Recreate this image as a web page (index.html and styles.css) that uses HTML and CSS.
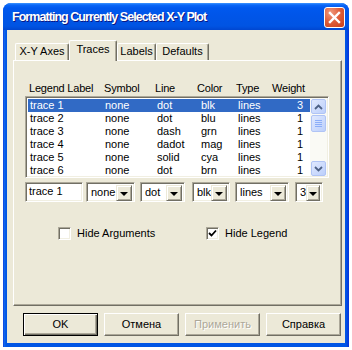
FILE: index.html
```html
<!DOCTYPE html>
<html lang="en">
<head>
  <meta charset="UTF-8">
  <title>Formatting Currently Selected X-Y Plot</title>
  <link rel="stylesheet" href="styles.css">
</head>
<body>
<div class="window">
  <div class="titlebar">
    <span class="title">Formatting Currently Selected X-Y Plot</span>
    <span class="close">
      <svg width="21" height="21" viewBox="0 0 21 21">
        <path d="M6 6 L15 15 M15 6 L6 15" stroke="#fff" stroke-width="2.4" stroke-linecap="square"/>
      </svg>
    </span>
  </div>

  <div class="client">
    <div class="tabs">
      <div class="tab tab-axes">X-Y Axes</div>
      <div class="tab tab-traces active">Traces</div>
      <div class="tab tab-labels">Labels</div>
      <div class="tab tab-defaults">Defaults</div>
    </div>

    <div class="panel">
      <div class="cols">
        <span>Legend Label</span>
        <span>Symbol</span>
        <span>Line</span>
        <span>Color</span>
        <span>Type</span>
        <span>Weight</span>
      </div>

      <div class="listbox">
        <div class="rows" id="rows"></div>
        <div class="vscroll">
          <div class="sbtn">
            <svg width="9" height="6" viewBox="0 0 9 6"><path d="M1 5 L4.5 1.5 L8 5" fill="none" stroke="#4d6185" stroke-width="1.8"/></svg>
          </div>
          <div class="thumb"><i></i><i></i><i></i><i></i></div>
          <div class="track"></div>
          <div class="sbtn">
            <svg width="9" height="6" viewBox="0 0 9 6"><path d="M1 1 L4.5 4.5 L8 1" fill="none" stroke="#4d6185" stroke-width="1.8"/></svg>
          </div>
        </div>
      </div>

      <div class="editrow">
        <div class="field f-label">trace 1</div>
        <div class="combo c-symbol"><span>none</span><b class="drop"></b></div>
        <div class="combo c-line"><span>dot</span><b class="drop"></b></div>
        <div class="combo c-color"><span>blk</span><b class="drop"></b></div>
        <div class="combo c-type"><span>lines</span><b class="drop"></b></div>
        <div class="combo c-weight"><span>3</span><b class="drop"></b></div>
      </div>

      <div class="checks">
        <label class="check c-args"><span class="box"></span>Hide Arguments</label>
        <label class="check c-legend">
          <span class="box">
            <svg width="9" height="9" viewBox="0 0 9 9"><path d="M1 4 L3.5 6.5 L8 1.5" fill="none" stroke="#000" stroke-width="1.8"/></svg>
          </span>Hide Legend</label>
      </div>
    </div>

    <div class="buttons">
      <div class="btn default">OK</div>
      <div class="btn">Отмена</div>
      <div class="btn disabled">Применить</div>
      <div class="btn">Справка</div>
    </div>
  </div>
</div>

<script>
// trace rows
const traces = [
  ["trace 1", "none", "dot", "blk", "lines", 3],
  ["trace 2", "none", "dot", "blu", "lines", 1],
  ["trace 3", "none", "dash", "grn", "lines", 1],
  ["trace 4", "none", "dadot", "mag", "lines", 1],
  ["trace 5", "none", "solid", "cya", "lines", 1],
  ["trace 6", "none", "dot", "brn", "lines", 1]
];

const rows = document.getElementById('rows');
traces.forEach((t, i) => {
  const row = document.createElement('div');
  row.className = i === 0 ? 'row sel' : 'row';
  row.innerHTML = t.map(v => `<span>${v}</span>`).join('');
  rows.appendChild(row);
});
</script>
</body>
</html>
```

FILE: styles.css
```css
body {
  margin: 0;
  background: #fff;
  font-family: "Liberation Sans", Arial, sans-serif;
  font-size: 11px;
  color: #000;
}

.window {
  width: 346px;
  height: 344px;
  margin: 3px 0 0 3px;
  background: linear-gradient(to right, #0831d9 0, #166aee 1px, #0055e5 3px, #0055e5 343px, #0831d9 346px);
  border-radius: 8px 8px 0 0;
  display: flex;
  flex-direction: column;
}

.titlebar {
  height: 27px;
  display: flex;
  align-items: center;
  justify-content: space-between;
  padding: 0 4px 0 9px;
  border-radius: 8px 8px 0 0;
  background: linear-gradient(to bottom, #3d95ff 0, #0a66f7 2px, #0058ee 5px, #0055e8 50%, #0054e3 85%, #0046d0 100%);
}
.title {
  color: #fff;
  font-weight: bold;
  font-size: 12.5px;
  letter-spacing: -0.95px;
  text-shadow: 1px 1px 0 #0a1883;
  padding-top: 1px;
}
.close {
  width: 21px;
  height: 21px;
  box-sizing: border-box;
  border: 1px solid #fff;
  border-radius: 3px;
  background: radial-gradient(circle at 30% 25%, #f09a7e 0, #e0603c 45%, #c93d17 100%);
  display: flex;
  align-items: center;
  justify-content: center;
  margin-top: 2px;
}
.close svg { margin: -1px; }

.client {
  flex: 1;
  margin: 0 4px 4px;
  background: #ece9d8;
  padding: 10px 0 0 6px;
}

/* tabs */
.tabs {
  display: flex;
  align-items: flex-end;
  height: 20px;
  margin-left: 2px;
}
.tab {
  height: 17px;
  box-sizing: border-box;
  line-height: 15px;
  text-align: center;
  border-top: 1px solid #fff;
  border-left: 1px solid #fff;
  border-right: 1px solid #716f64;
  box-shadow: inset -1px 0 0 #aca899;
  border-radius: 2px 2px 0 0;
  background: #ece9d8;
}
.tab.active {
  height: 21px;
  margin-bottom: -1px;
  line-height: 17px;
  position: relative;
  z-index: 1;
}
.tab-axes { width: 54px; }
.tab-traces { width: 48px; }
.tab-labels { width: 39px; }
.tab-defaults { width: 53px; }

.panel {
  width: 329px;
  height: 246px;
  box-sizing: border-box;
  border: 1px solid #716f64;
  border-top-color: #fff;
  border-left-color: #fff;
  box-shadow: inset -1px -1px 0 #aca899;
  padding: 19px 0 0 11px;
}

.cols {
  display: grid;
  grid-template-columns: 75px 51px 42px 39px 36px auto;
  padding-left: 4px;
  line-height: 16px;
  letter-spacing: -0.2px;
}

/* list */
.listbox {
  width: 304px;
  height: 82px;
  box-sizing: border-box;
  border: 1px solid #fff;
  border-top-color: #aca899;
  border-left-color: #aca899;
  box-shadow: inset 1px 1px 0 #716f64, inset -1px -1px 0 #f1efe2;
  background: #fff;
  display: flex;
  padding: 2px 1px 1px 2px;
}
.rows {
  flex: 1;
}
.row {
  display: grid;
  grid-template-columns: 75px 52px 44px 37px 45px 20px;
  padding-left: 2px;
  height: 13px;
  line-height: 13px;
}
.row span:last-child { text-align: right; }
.row.sel {
  background: #316ac5;
  color: #fff;
}

.vscroll {
  width: 17px;
  display: flex;
  flex-direction: column;
  align-items: center;
  background: #fafaf5;
  margin-top: -1px;
}
.sbtn, .thumb {
  width: 15px;
  height: 15px;
  box-sizing: border-box;
  border: 1px solid #b0c4f5;
  border-radius: 2px;
  background: linear-gradient(to bottom right, #e0e9fe, #bccffb);
  display: flex;
  align-items: center;
  justify-content: center;
  margin-top: 1px;
}
.thumb {
  height: 17px;
  flex-direction: column;
  gap: 1px;
}
.thumb i {
  display: block;
  width: 7px;
  height: 1px;
  background: #8caef8;
}
.track { flex: 1; }

/* edit row */
.editrow {
  display: flex;
  margin-top: 4px;
  height: 20px;
}
.field, .combo {
  height: 20px;
  box-sizing: border-box;
  border: 1px solid #fff;
  border-top-color: #aca899;
  border-left-color: #aca899;
  box-shadow: inset 1px 1px 0 #716f64, inset -1px -1px 0 #f1efe2;
  background: #fff;
  line-height: 16px;
  padding-left: 3px;
}
.combo {
  display: flex;
  justify-content: space-between;
  padding: 2px 2px 2px 4px;
  line-height: 15px;
}
.drop {
  width: 16px;
  height: 16px;
  box-sizing: border-box;
  background: #ece9d8;
  border: 1px solid #716f64;
  border-top-color: #ece9d8;
  border-left-color: #ece9d8;
  box-shadow: inset 1px 1px 0 #fff, inset -1px -1px 0 #aca899;
  display: flex;
  align-items: center;
  justify-content: center;
}
.drop::after {
  content: "";
  border-left: 4px solid transparent;
  border-right: 4px solid transparent;
  border-top: 4px solid #000;
  margin-top: 1px;
}
.f-label { width: 58px; }
.c-symbol { width: 49px; margin-left: 3px; }
.c-line { width: 45px; margin-left: 5px; }
.c-color { width: 38px; margin-left: 7px; }
.c-type { width: 54px; margin-left: 5px; }
.c-weight { width: 28px; margin-left: 6px; }

/* checkboxes */
.checks {
  display: flex;
  margin-top: 24px;
}
.check {
  display: flex;
  align-items: center;
  line-height: 15px;
}
.c-args { margin-left: 33px; width: 148px; }
.box {
  width: 13px;
  height: 13px;
  box-sizing: border-box;
  border: 1px solid #fff;
  border-top-color: #aca899;
  border-left-color: #aca899;
  box-shadow: inset 1px 1px 0 #716f64, inset -1px -1px 0 #f1efe2;
  background: #fff;
  margin-right: 6px;
  display: flex;
  align-items: center;
  justify-content: center;
}

/* buttons */
.buttons {
  display: flex;
  gap: 6px;
  margin: 7px 0 0 10px;
}
.btn {
  width: 75px;
  height: 23px;
  box-sizing: border-box;
  line-height: 21px;
  text-align: center;
  font-weight: normal;
  border: 1px solid #716f64;
  border-top-color: #fff;
  border-left-color: #fff;
  box-shadow: inset -1px -1px 0 #aca899;
}
.btn.default {
  border: 1px solid #000;
  box-shadow: inset 1px 1px 0 #fff, inset -1px -1px 0 #716f64, inset -2px -2px 0 #aca899;
}
.btn.disabled {
  color: #aca899;
  text-shadow: 1px 1px 0 #fff;
}
```
